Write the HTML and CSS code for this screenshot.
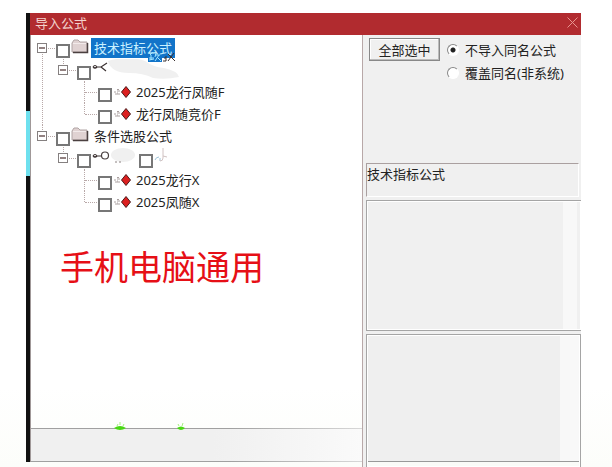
FILE: index.html
```html
<!DOCTYPE html>
<html lang="zh-CN">
<head>
    <meta charset="UTF-8">
    <meta name="viewport" content="width=device-width, initial-scale=1.0">
    <title>导入公式</title>
    <link rel="stylesheet" href="styles.css">
</head>
<body>

    <!-- Shared tree icons -->
    <svg class="symbols" aria-hidden="true">
        <symbol id="minus" viewBox="0 0 10 10">
            <rect x="0.5" y="0.5" width="9" height="9" fill="#fff" stroke="#858080"/>
            <path d="M2 5h6" stroke="#4a2e2e" stroke-width="1.2"/>
        </symbol>
        <symbol id="folder" viewBox="0 0 18 16">
            <path d="M1 13V4l2-3h4l2 2h7v10z" fill="#e0d2d2" stroke="#b0a4a4"/>
            <path d="M2 4.500h13" stroke="#f2eaea"/>
            <path d="M2 13.500h14.500V4" fill="none" stroke="#4b4040" stroke-width="1.500"/>
        </symbol>
        <symbol id="formula" viewBox="0 0 18 12">
            <path d="M0 6h2M3 5h3M1 8h5M3 3.500h2M3 7h1" stroke="#aaa0a0"/>
            <path d="M12 0.500l4.500 5.500-4.500 5.500L7.500 6z" fill="#dc2020" stroke="#4a1c1c"/>
        </symbol>
    </svg>

    <div class="dialog">
        <div class="edge"></div>

        <div class="window">
            <header class="titlebar">
                <h1>导入公式</h1>
                <button class="close" type="button" aria-label="关闭">
                    <svg viewBox="0 0 11 11"><path d="M0.500 0.500l10 10M10.500 0.500l-10 10"/></svg>
                </button>
            </header>

            <div class="content">
                <main class="left">
                    <ul class="tree">
                        <li>
                            <div class="row">
                                <button class="toggle" type="button" aria-label="折叠"><svg><use href="#minus"/></svg></button>
                                <input type="checkbox" id="c1">
                                <svg class="folder"><use href="#folder"/></svg>
                                <label class="selected" for="c1">技术指标公式</label>
                                <svg class="remnant" viewBox="0 0 28 14">
                                    <path d="M0 8h14v5H0z" fill="#1274c9"/>
                                    <path d="M2 6l3-3M1 9h5M3 6v5M1 11l5-1M8 4l-1 4M7 6h5M11 6l-4 6M9 8l4 4" fill="none" stroke="#9fe4ff"/>
                                    <path d="M15 12h3V7M18 9h-2M20 12l6-8M20 5l7 7" fill="none" stroke="#3a3030"/>
                                </svg>
                            </div>
                            <ul>
                                <li>
                                    <div class="row">
                                        <button class="toggle" type="button" aria-label="折叠"><svg><use href="#minus"/></svg></button>
                                        <input type="checkbox" aria-label="指标分组">
                                        <svg class="smear" viewBox="0 0 90 22">
                                            <path d="M17 2q20-6 37 0q8 6 19 7q14 3 15 9q-14 3-26 1q-10-5-24-5q-18 0-21-12z" fill="#f0f0f0"/>
                                            <path d="M2 8q2-3 4 0q-2 2-4 0M6 8h4l6-4M10 8l5 4" fill="none" stroke="#3a3030" stroke-width="1.200"/>
                                        </svg>
                                    </div>
                                    <ul>
                                        <li>
                                            <div class="row">
                                                <input type="checkbox" id="c2">
                                                <svg class="formula"><use href="#formula"/></svg>
                                                <label for="c2">2025龙行凤随F</label>
                                            </div>
                                        </li>
                                        <li>
                                            <div class="row">
                                                <input type="checkbox" id="c3">
                                                <svg class="formula"><use href="#formula"/></svg>
                                                <label for="c3">龙行凤随竞价F</label>
                                            </div>
                                        </li>
                                    </ul>
                                </li>
                            </ul>
                        </li>
                        <li>
                            <div class="row">
                                <button class="toggle" type="button" aria-label="折叠"><svg><use href="#minus"/></svg></button>
                                <input type="checkbox" id="c4">
                                <svg class="folder"><use href="#folder"/></svg>
                                <label for="c4">条件选股公式</label>
                            </div>
                            <ul>
                                <li>
                                    <div class="row">
                                        <button class="toggle" type="button" aria-label="折叠"><svg><use href="#minus"/></svg></button>
                                        <input type="checkbox" aria-label="选股分组">
                                        <svg class="group" viewBox="0 0 48 22">
                                            <ellipse cx="32" cy="8" rx="12" ry="7" fill="#f0f0f0"/>
                                            <path d="M2 9q2-3 4 0q-2 2-4 0M6 9h5" fill="none" stroke="#3a3030" stroke-width="1.200"/>
                                            <circle cx="14" cy="8.500" r="3.500" fill="none" stroke="#4a4040" stroke-width="1.200"/>
                                            <path d="M24 15h2M28 15h2" stroke="#8a8080"/>
                                        </svg>
                                        <input type="checkbox" aria-label="选股子项">
                                        <svg class="scrap" viewBox="0 0 16 22">
                                            <path d="M2 13q1-3 4-3M7 11v3" fill="none" stroke="#9fc4d8"/>
                                            <path d="M10 1v10q0 3-3 3M10 9l4 1" fill="none" stroke="#d0c2c2"/>
                                        </svg>
                                    </div>
                                    <ul>
                                        <li>
                                            <div class="row">
                                                <input type="checkbox" id="c5">
                                                <svg class="formula"><use href="#formula"/></svg>
                                                <label for="c5">2025龙行X</label>
                                            </div>
                                        </li>
                                        <li>
                                            <div class="row">
                                                <input type="checkbox" id="c6">
                                                <svg class="formula"><use href="#formula"/></svg>
                                                <label for="c6">2025凤随X</label>
                                            </div>
                                        </li>
                                    </ul>
                                </li>
                            </ul>
                        </li>
                    </ul>

                    <p class="notice">手机电脑通用</p>

                    <footer class="status">
                        <svg class="grass" viewBox="0 0 100 8">
                            <path d="M0 6q6-4 12 0q-6 4-12 0zM63 6q4-3 8 0q-4 4-8 0z" fill="#48d812"/>
                            <path d="M3 4l1-2M6 3V0M9 4l1-2M65 4l-1-2M68 4l1-3" stroke="#a5ef80"/>
                        </svg>
                    </footer>
                </main>

                <aside class="right">
                    <form class="options">
                        <button class="select-all" type="button">全部选中</button>
                        <div class="radios">
                            <label><input type="radio" name="mode" checked>不导入同名公式</label>
                            <label><input type="radio" name="mode">覆盖同名(非系统)</label>
                        </div>
                    </form>
                    <div class="caption">技术指标公式</div>
                    <div class="pane pane-top"></div>
                    <div class="pane pane-bottom"></div>
                </aside>
            </div>
        </div>
    </div>

</body>
</html>
```

FILE: styles.css
```css
* {
    margin: 0;
    padding: 0;
    box-sizing: border-box;
}

body {
    background: #fff;
    color: #222;
    font-family: "Noto Sans", "Noto Sans CJK SC", sans-serif;
    font-size: 13px;
    line-height: 20px;
}

button,
input {
    font: inherit;
    color: inherit;
}

ul {
    list-style: none;
}

svg {
    display: block;
    flex: none;
}

.symbols {
    position: absolute;
    width: 0;
    height: 0;
}

.dialog {
    display: flex;
    min-height: 100vh;
    padding: 13px 31px 0 26px;
    background: linear-gradient(to top, #fcfdfa, #fff 80px);
}

/* Strip of the desktop behind the window */
.edge {
    width: 4px;
    margin-bottom: 5px;
    background: linear-gradient(#111 98px, #6ee0ee 98px, #6ee0ee 163px, #111 163px);
}

.window {
    flex: 1;
    display: flex;
    flex-direction: column;
}

.titlebar {
    display: flex;
    justify-content: space-between;
    align-items: center;
    height: 22px;
    padding: 0 3px 3px 5px;
    background: #b12b2f;
    color: #f3d2cc;
}

.titlebar h1 {
    font-size: 13px;
    font-weight: normal;
}

.close {
    width: 11px;
    height: 11px;
    border: 0;
    background: none;
}

.close svg {
    width: 11px;
    height: 11px;
    stroke: #e8948e;
}

.content {
    flex: 1;
    display: flex;
}

.left {
    flex: 1;
    display: flex;
    flex-direction: column;
    margin-bottom: 5px;
    border-left: 1px solid #a09898;
}

/* Formula tree */
.tree {
    padding: 2px 0 0 6px;
}

.tree ul {
    padding-left: 21px;
}

.tree li {
    position: relative;
}

.tree li::before {
    content: "";
    position: absolute;
    top: 0;
    bottom: 0;
    left: 5px;
    border-left: 1px dotted #b8a8a8;
}

.tree > li:first-child::before {
    top: 11px;
}

.tree li:last-child::before {
    bottom: auto;
    height: 11px;
}

.row {
    position: relative;
    display: flex;
    align-items: center;
    height: 22px;
}

.row::before {
    content: "";
    position: absolute;
    left: 6px;
    width: 12px;
    border-top: 1px dotted #b8a8a8;
}

.toggle {
    position: relative;
    width: 10px;
    height: 10px;
    margin-right: 9px;
    border: 0;
    background: #fff;
}

.toggle svg {
    width: 10px;
    height: 10px;
}

.row input {
    appearance: none;
    flex: none;
    width: 14px;
    height: 14px;
    margin-top: 6px;
    border: 2px solid #777;
    background: #fff;
}

.row > input:first-child {
    margin-left: 19px;
}

.folder {
    width: 18px;
    height: 16px;
    margin: 0 2px 3px 1px;
}

.formula {
    width: 18px;
    height: 12px;
    margin: 0 4px 0 2px;
}

.row .folder + label {
    padding: 0 3px;
}

.row .selected {
    background: #1274c9;
    color: #c9f1ff;
}

/* Leftover strokes of the label below */
.remnant {
    position: absolute;
    top: 12px;
    left: 111px;
    width: 28px;
    height: 14px;
}

.smear {
    width: 90px;
    height: 22px;
}

.group {
    width: 48px;
    height: 22px;
}

.scrap {
    width: 16px;
    height: 22px;
}

.notice {
    padding: 32px 0 0 29px;
    color: #e60f16;
    font-family: "Liberation Serif", "Noto Sans CJK SC", serif;
    font-size: 34px;
    line-height: 48px;
}

.status {
    position: relative;
    height: 34px;
    margin-top: auto;
    background: linear-gradient(to right, #f0f0f0 55%, #fafafa);
    border-top: 1px solid;
    border-bottom: 1px solid #999;
    border-image: linear-gradient(to right, #a0a0a0 60%, #d8d8d8) 1;
    border-left: 0;
    border-right: 0;
}

.grass {
    position: absolute;
    top: -7px;
    left: 83px;
    width: 100px;
    height: 8px;
}

/* Options and details */
.right {
    flex: none;
    width: 219px;
    display: flex;
    flex-direction: column;
    padding-left: 3px;
    border-left: 1px solid #b8a8a8;
    background: #f0f0f0;
}

.options {
    display: flex;
    align-items: flex-start;
    gap: 7px;
    height: 128px;
    padding: 3px;
}

.select-all {
    width: 71px;
    height: 23px;
    border: 1px solid #888;
    box-shadow: inset -1px -1px #bbb, inset 1px 1px #fff;
    background: #f0f0f0;
}

.radios label {
    display: flex;
    align-items: center;
    gap: 6px;
    height: 23px;
    white-space: nowrap;
}

.radios input {
    appearance: none;
    width: 12px;
    height: 12px;
    border: 1px solid;
    border-color: #888 #fff #fff #888;
    border-radius: 50%;
    background: #fff;
}

.radios input:checked {
    background: radial-gradient(circle, #222 2px, #fff 3px);
}

.caption {
    height: 34px;
    margin-right: 2px;
    border-top: 1px solid #aaa0a0;
    border-left: 1px solid #aaa0a0;
    border-right: 1px solid #fff;
    border-bottom: 1px solid #fff;
}

.pane {
    border: 1px solid #a5a5a5;
    box-shadow: inset 0 0 0 1px #fff;
}

.pane-top {
    height: 131px;
    margin: 3px 0;
    border-right: 0;
    background: linear-gradient(to left, #f0f0f0 4px, #f8f8f8 4px, #f8f8f8 18px, #f0f0f0 18px);
}

.pane-bottom {
    flex: 1;
    border-bottom: 0;
    background:
        linear-gradient(to top, #fafbf8 5px, #999 5px, #999 6px, transparent 6px),
        linear-gradient(to left, #f8f8f8 20px, #efefef 20px);
}
```
